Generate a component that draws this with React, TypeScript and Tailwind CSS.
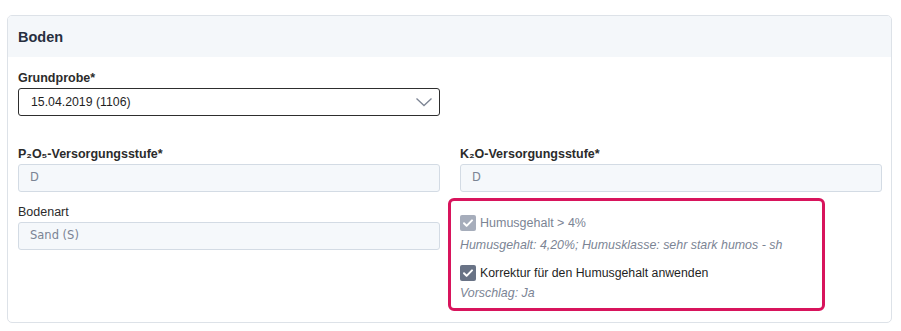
import React from 'react';

function Label({ children, bold = true }: { children: React.ReactNode; bold?: boolean }) {
  return (
    <div className={`text-[12.5px] leading-[16px] text-[#2b2b2b] mb-[2px] ${bold ? 'font-bold' : ''}`}>
      {children}
    </div>
  );
}

function ReadOnly({ value }: { value: string }) {
  return (
    <div className="h-[28px] rounded-[3px] border border-[#d3dbe4] bg-[#f5f8fb] pl-[11px] flex items-center text-[11.5px] text-[#7b8494] font-['DejaVu_Sans',sans-serif]">
      {value}
    </div>
  );
}

function Check({ disabled }: { disabled?: boolean }) {
  return (
    <span
      className={`w-[16px] h-[16px] rounded-[2px] flex items-center justify-center shrink-0 ${
        disabled ? 'bg-[#a6adbb]' : 'bg-[#697386]'
      }`}
    >
      <svg width="12" height="12" viewBox="0 0 12 12" fill="none">
        <path d="M2 6.3l2.6 2.6L10 3.4" stroke="white" strokeWidth="2" strokeLinecap="round" strokeLinejoin="round" />
      </svg>
    </span>
  );
}

export default function App() {
  return (
    <div className="w-[901px] h-[331px] bg-white pt-[15px] pl-[7px] font-['Liberation_Sans',Arial,sans-serif]">
      <div className="w-[885px] h-[308px] border border-[#dde2e8] rounded-[5px] overflow-hidden">
        <div className="h-[41px] bg-[#f4f7fa] flex items-center px-[10px] pt-[3px]">
          <h2 className="text-[14.5px] font-bold text-[#272f3f]">Boden</h2>
        </div>

        <div className="pl-[10px] pr-[9px] pt-[13px]">
          <Label>Grundprobe*</Label>
          <div className="w-[422px] h-[28px] border border-[#2e2e2e] rounded-[3px] flex items-center justify-between pl-[12px] pr-[6px] text-[12.3px] text-[#1f1f1f]">
            <span>15.04.2019 (1106)</span>
            <svg width="18" height="10" viewBox="0 0 18 10" fill="none">
              <path d="M1.5 1.5l7.5 7 7.5-7" stroke="#7d8594" strokeWidth="1.3" />
            </svg>
          </div>

          <div className="grid grid-cols-2 gap-x-[20px] mt-[30px]">
            <div>
              <Label>P₂O₅-Versorgungsstufe*</Label>
              <ReadOnly value="D" />
              <div className="mt-[12px]">
                <Label bold={false}>Bodenart</Label>
                <ReadOnly value="Sand (S)" />
              </div>
            </div>

            <div>
              <Label>K₂O-Versorgungsstufe*</Label>
              <ReadOnly value="D" />
              <div className="mt-[6px] -ml-[12px] w-[377px] h-[113px] border-[3px] border-[#d8145c] rounded-[6px] pl-[9px] pt-[14px]">
                <div className="flex items-center gap-[4px] text-[12.5px] leading-[16px] text-[#7b8494]">
                  <Check disabled />
                  <span>Humusgehalt &gt; 4%</span>
                </div>
                <div className="mt-[6px] text-[12.4px] leading-[16px] italic text-[#7b8494]">
                  Humusgehalt: 4,20%; Humusklasse: sehr stark humos - sh
                </div>
                <div className="mt-[12px] flex items-center gap-[4px] text-[12.3px] leading-[16px] text-[#1f1f1f]">
                  <Check />
                  <span>Korrektur für den Humusgehalt anwenden</span>
                </div>
                <div className="mt-[4px] text-[12.4px] leading-[16px] italic text-[#7b8494]">Vorschlag: Ja</div>
              </div>
            </div>
          </div>
        </div>
      </div>
    </div>
  );
}
